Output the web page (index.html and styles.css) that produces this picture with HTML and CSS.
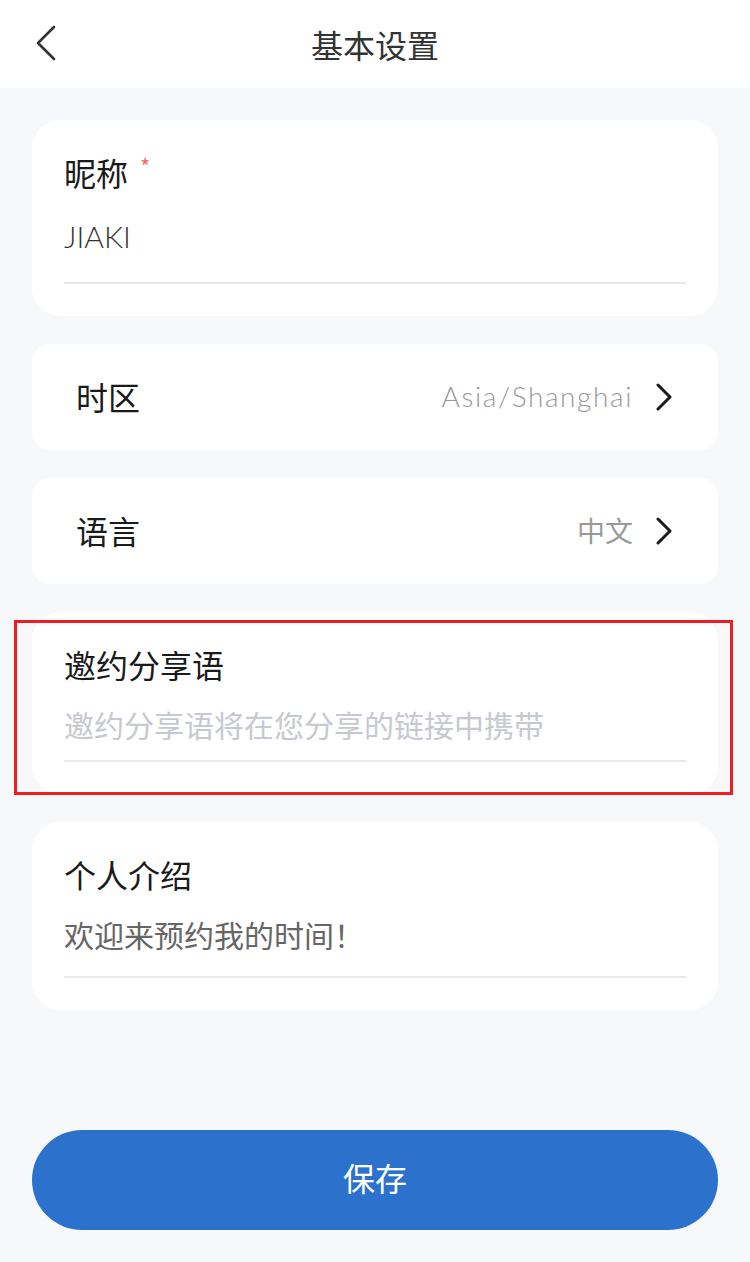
FILE: index.html
```html
<!DOCTYPE html>
<html lang="zh-CN">
<head>
<meta charset="utf-8">
<title>基本设置</title>
<link rel="stylesheet" href="styles.css">
</head>
<body>
<header class="nav">
  <div class="nav-left">
    <svg class="back" width="22" height="36" viewBox="0 0 22 36"><polyline points="19,2 3,18 19,34" fill="none" stroke="#333" stroke-width="2.6" stroke-linecap="round" stroke-linejoin="round"/></svg>
  </div>
  <h1 class="nav-title">基本设置</h1>
  <div class="nav-right"></div>
</header>

<main class="content">
  <section class="card field-card card-nick">
    <div class="label">昵称<span class="req">*</span></div>
    <div class="field latin">JIAKI</div>
  </section>

  <section class="card row-card">
    <div class="row-label">时区</div>
    <div class="row-right">
      <span class="row-value latin">Asia/Shanghai</span>
      <svg class="chev" width="18" height="28" viewBox="0 0 18 28"><polyline points="3,2 15,14 3,26" fill="none" stroke="#1a1a1a" stroke-width="3" stroke-linecap="round" stroke-linejoin="round"/></svg>
    </div>
  </section>

  <section class="card row-card">
    <div class="row-label">语言</div>
    <div class="row-right">
      <span class="row-value">中文</span>
      <svg class="chev" width="18" height="28" viewBox="0 0 18 28"><polyline points="3,2 15,14 3,26" fill="none" stroke="#1a1a1a" stroke-width="3" stroke-linecap="round" stroke-linejoin="round"/></svg>
    </div>
  </section>

  <section class="card field-card card-invite">
    <div class="label">邀约分享语</div>
    <div class="field placeholder">邀约分享语将在您分享的链接中携带</div>
    <div class="highlight"></div>
  </section>

  <section class="card field-card card-intro">
    <div class="label">个人介绍</div>
    <div class="field intro">欢迎来预约我的时间！</div>
  </section>

  <button class="save" type="button">保存</button>
</main>
</body>
</html>
```

FILE: styles.css
```css
* { box-sizing: border-box; }
html, body { margin: 0; padding: 0; }
body {
  background: #f7f8fa;
  font-family: "Noto Sans CJK SC", "Noto Sans", sans-serif;
  color: #1a1a1a;
  width: 750px;
  min-height: 1262px;
}

.nav {
  height: 88px;
  background: #fff;
  display: grid;
  grid-template-columns: 1fr auto 1fr;
  align-items: center;
}
.nav-left { display: flex; align-items: center; padding-left: 35px; }
.back { display: block; margin-top: -2px; }
.nav-title {
  margin: 0;
  font-size: 32px;
  font-weight: 400;
  line-height: 40px;
  color: #333;
  padding-bottom: 1px;
}

.content {
  padding: 32px 32px 0;
  display: flex;
  flex-direction: column;
  gap: 28px;
}

.card {
  background: #fff;
  border-radius: 28px;
}

.field-card {
  padding: 32px 32px 32px;
  position: relative;
}
.label {
  font-size: 32px;
  line-height: 40px;
  color: #1a1a1a;
}
.req {
  display: inline-block;
  vertical-align: top;
  margin-left: 12px;
  font-size: 22px;
  line-height: 26px;
  color: #f36d6d;
}
.field {
  font-size: 30px;
  line-height: 40px;
  border-bottom: 2px solid #e8e8e8;
}
.card-nick .field {
  padding: 24px 0 26px;
  color: #333;
}
.card-invite .field {
  padding: 20px 0 16px;
}
.card-intro .field {
  padding: 20px 0 22px;
}
.latin {
  font-family: "Lato", "Noto Sans", sans-serif;
  font-weight: 300;
}
.placeholder { color: #c6c9cf; }
.intro { color: #666; }

.row-card {
  height: 106px;
  border-radius: 18px;
  padding: 0 45px 2px 44px;
  display: flex;
  align-items: center;
  justify-content: space-between;
}
.row-label {
  font-size: 32px;
  line-height: 40px;
  color: #1a1a1a;
}
.row-right {
  display: flex;
  align-items: center;
  gap: 22px;
}
.row-value {
  font-size: 28px;
  line-height: 40px;
  color: #999;
}
.row-value.latin { letter-spacing: 1.6px; }
.chev { display: block; margin-top: 2px; }

.highlight {
  position: absolute;
  left: -18px;
  top: 8px;
  right: -15px;
  bottom: -1px;
  border: 3px solid #ee1c25;
  pointer-events: none;
}

.save {
  margin-top: 92px;
  height: 100px;
  width: 100%;
  border: none;
  border-radius: 50px;
  background: #2c72cc;
  color: #fff;
  font-family: "Noto Sans CJK SC", "Noto Sans", sans-serif;
  font-size: 32px;
  line-height: 40px;
  padding: 0 0 6px;
}
```
